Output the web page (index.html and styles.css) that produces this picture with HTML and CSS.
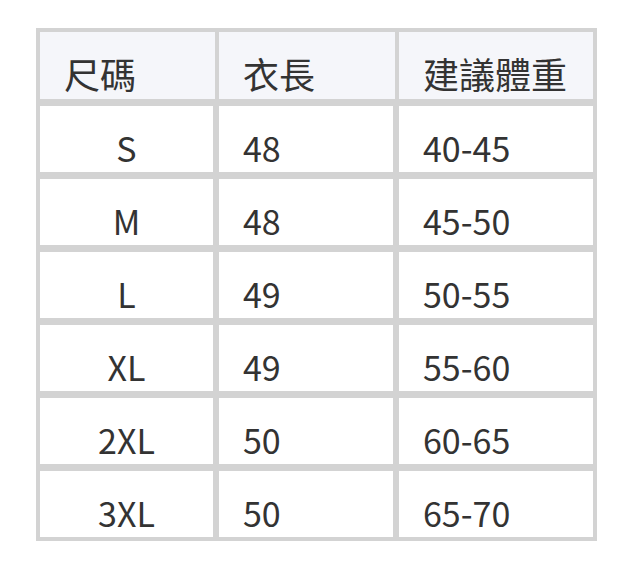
FILE: index.html
```html
<!DOCTYPE html>
<html lang="zh-Hant">
<head>
<meta charset="utf-8">
<title>尺碼表</title>
<link rel="stylesheet" href="styles.css">
</head>
<body>
<div class="wrap">
  <table class="size-table">
    <thead>
      <tr>
        <th class="c1">尺碼</th>
        <th class="c2">衣長</th>
        <th class="c3">建議體重</th>
      </tr>
    </thead>
    <tbody>
      <tr><td class="size">S</td><td class="mid">48</td><td class="last">40-45</td></tr>
      <tr><td class="size">M</td><td class="mid">48</td><td class="last">45-50</td></tr>
      <tr><td class="size">L</td><td class="mid">49</td><td class="last">50-55</td></tr>
      <tr><td class="size">XL</td><td class="mid">49</td><td class="last">55-60</td></tr>
      <tr><td class="size">2XL</td><td class="mid">50</td><td class="last">60-65</td></tr>
      <tr><td class="size">3XL</td><td class="mid">50</td><td class="last">65-70</td></tr>
    </tbody>
  </table>
</div>
</body>
</html>
```
FILE: styles.css
```css
html, body {
  margin: 0;
  padding: 0;
  background: #ffffff;
}

.wrap {
  padding: 28px 35px 0 36px;
}

.size-table {
  width: 561px;
  table-layout: fixed;
  border-collapse: separate;
  border-spacing: 4px;
  background: #d3d3d3;
  font-family: "Noto Sans CJK TC", "Noto Sans CJK SC", sans-serif;
  font-size: 34px;
  line-height: normal;
  color: #333333;
}

.size-table th,
.size-table td {
  box-sizing: border-box;
  padding: 0 0 0 24px;
  vertical-align: bottom;
  text-align: left;
  font-weight: 400;
  white-space: nowrap;
}

.size-table th {
  background: #f5f6fa;
  height: 67px;
  font-size: 36px;
}

.size-table .c1 { width: 175px; }
.size-table .c2 { width: 176px; }
.size-table .c3 { width: 194px; }

.size-table td {
  background: #ffffff;
  height: 69px;
  border-top: 3px solid #d3d3d3;
}

.size-table td.size {
  text-align: center;
  padding: 0;
  border-right: 2px solid #d3d3d3;
}

.size-table td.mid {
  border-right: 2px solid #d3d3d3;
}
```
